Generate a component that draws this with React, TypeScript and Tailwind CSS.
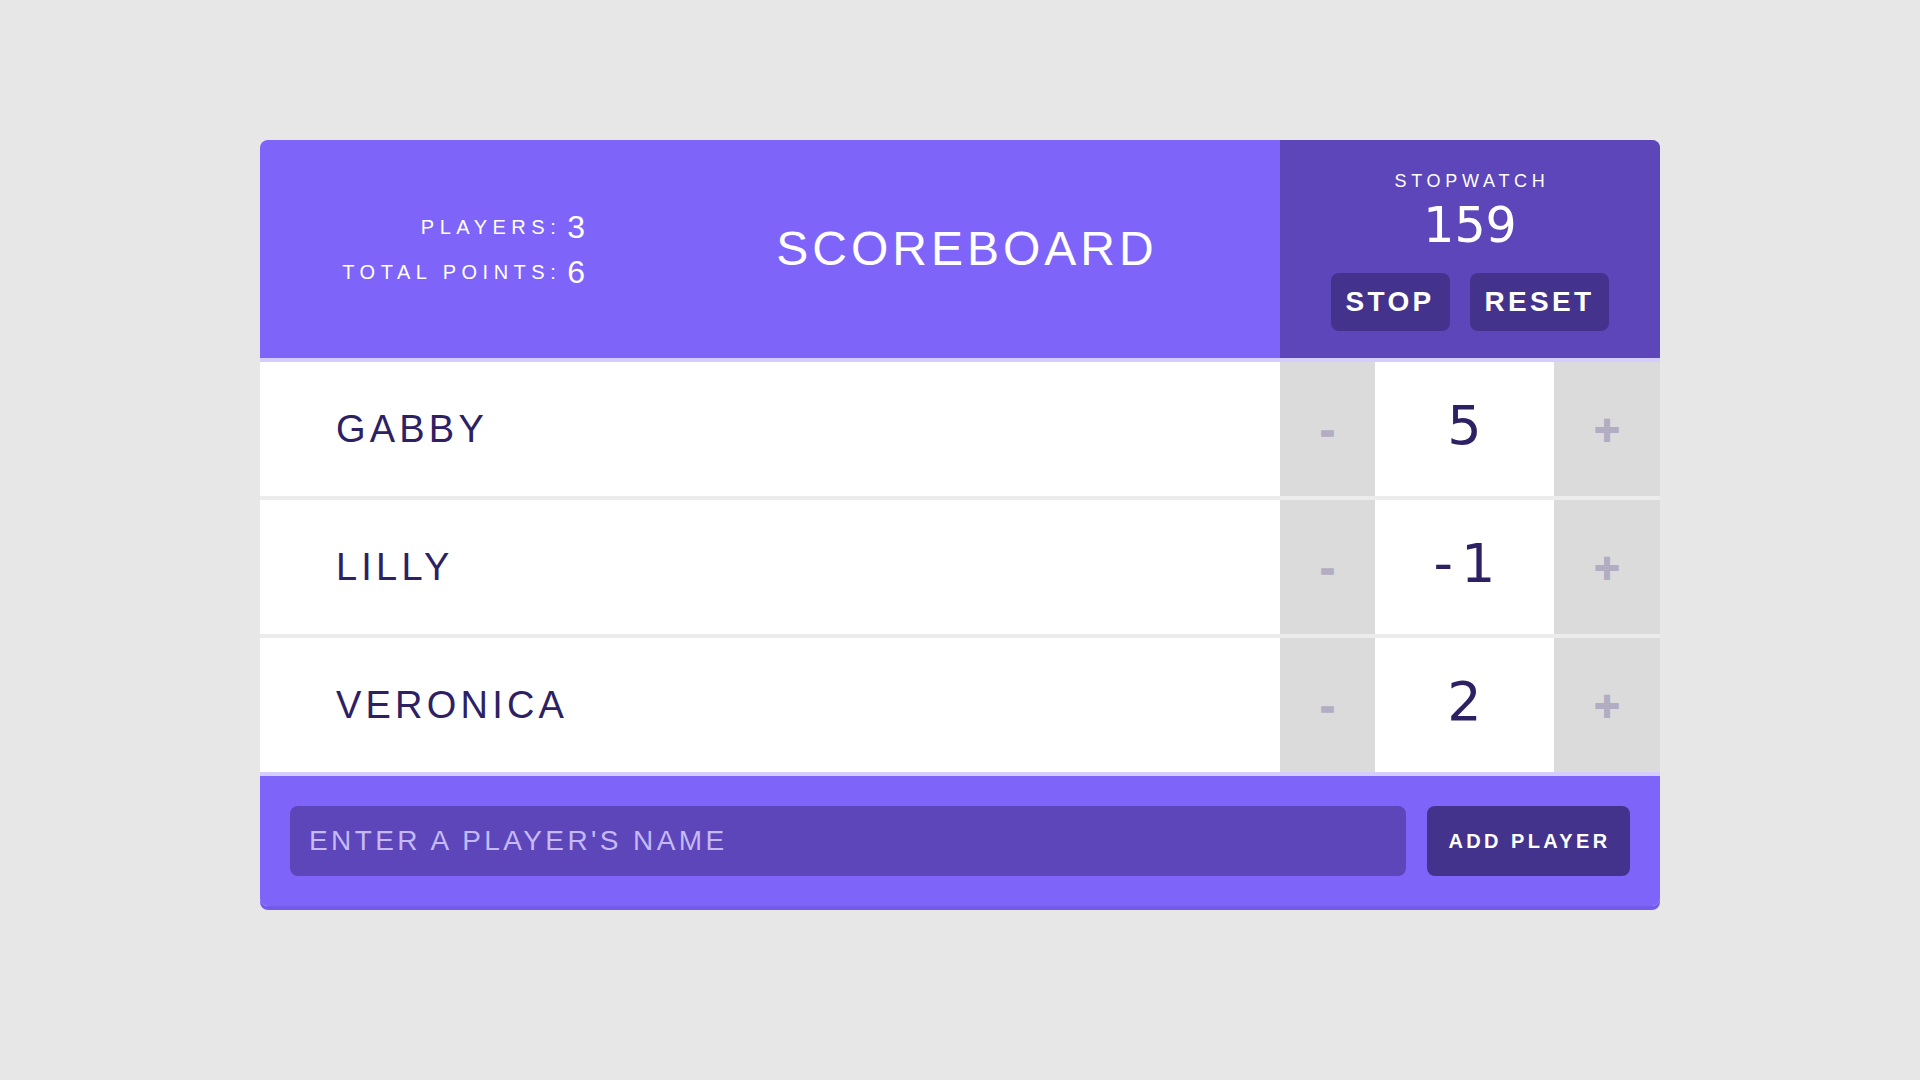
import { useState } from "react"

const sans = "font-['Liberation_Sans',Arial,sans-serif]"
const dejavu = "font-['DejaVu_Sans',Verdana,sans-serif]"

type Player = { id: number; name: string; score: number }

const initialPlayers: Player[] = [
  { id: 1, name: "Gabby", score: 5 },
  { id: 2, name: "Lilly", score: -1 },
  { id: 3, name: "Veronica", score: 2 },
]

function Stats({ players }: { players: Player[] }) {
  const total = players.reduce((sum, p) => sum + p.score, 0)
  return (
    <div className="w-[394px] flex justify-end pr-[69px]">
      <div className="grid grid-cols-[auto_auto] items-center gap-x-[6px]">
        <span className="h-[45px] flex items-center justify-end text-[20px] tracking-[5.5px] text-white">PLAYERS:</span>
        <span className="h-[45px] flex items-center text-[32px] text-white">{players.length}</span>
        <span className="h-[45px] flex items-center justify-end text-[20px] tracking-[5.5px] text-white">TOTAL POINTS:</span>
        <span className="h-[45px] flex items-center text-[32px] text-white">{total}</span>
      </div>
    </div>
  )
}

function Stopwatch() {
  return (
    <div className="w-[380px] self-stretch bg-[#5c46ba] flex flex-col items-center justify-center">
      <div className="text-[18px] leading-[22px] tracking-[4.7px] text-white pl-[4px] mt-[2px]">STOPWATCH</div>
      <div className={`${dejavu} mt-[9px] text-[49px] leading-[50px] text-white`}>159</div>
      <div className="mt-[22px] flex gap-[20px]">
        <button className="h-[58px] px-[15px] rounded-lg bg-[#43338c] text-white text-[28px] font-bold tracking-[3.3px]">
          STOP
        </button>
        <button className="h-[58px] px-[15px] rounded-lg bg-[#43338c] text-white text-[28px] font-bold tracking-[3.3px]">
          RESET
        </button>
      </div>
    </div>
  )
}

function PlayerRow({ player, last }: { player: Player; last: boolean }) {
  return (
    <div className={`flex bg-white ${last ? "h-[134px]" : "h-[138px] border-b-4 border-[#ececec]"}`}>
      <div className="flex-1 flex items-center pl-[76px] text-[38px] tracking-[4.2px] text-[#2d2164] uppercase">
        {player.name}
      </div>
      <button className={`${dejavu} w-[95px] bg-[#dbdbdb] text-[36px] font-bold text-[#b2adc2] [-webkit-text-stroke:1.5px_#b2adc2] flex items-center justify-center pt-[6px]`}>
        -
      </button>
      <div className={`${dejavu} w-[179px] flex items-center justify-center text-[54px] text-[#2d2164] pb-[8px] ${player.score < 0 ? "tracking-[8px] pl-[8px]" : ""}`}>
        {player.score}
      </div>
      <button className={`${dejavu} w-[106px] bg-[#dbdbdb] text-[34px] font-bold text-[#b2adc2] [-webkit-text-stroke:2px_#b2adc2] flex items-center justify-center`}>
        +
      </button>
    </div>
  )
}

export default function App() {
  const [players] = useState<Player[]>(initialPlayers)
  const [name, setName] = useState("")

  return (
    <div className={`${sans} min-h-screen bg-[#e7e7e7] pt-[140px]`}>
      <div className="mx-auto w-[1400px] rounded-lg overflow-hidden shadow-[0_4px_0_#7459ea]">
        {/* Header */}
        <header className="flex items-center h-[222px] bg-[#7f64fa] border-b-4 border-[#d5ccff]">
          <Stats players={players} />
          <h1 className="flex-1 text-center text-[48px] tracking-[4px] text-white font-normal">SCOREBOARD</h1>
          <Stopwatch />
        </header>

        {/* Players */}
        {players.map((p, i) => (
          <PlayerRow key={p.id} player={p} last={i === players.length - 1} />
        ))}

        {/* Add player form */}
        <form
          className="flex gap-[21px] bg-[#7f64fa] border-t-4 border-[#d5ccff] px-[30px] py-[30px]"
          onSubmit={(e) => e.preventDefault()}
        >
          <input
            value={name}
            onChange={(e) => setName(e.target.value)}
            placeholder="ENTER A PLAYER'S NAME"
            className="flex-1 h-[70px] rounded-lg bg-[#5c46ba] pl-[19px] text-[28px] tracking-[3.4px] text-white placeholder:text-[#c5b9f7] outline-none"
          />
          <button className="w-[203px] h-[70px] rounded-lg bg-[#43338c] text-white text-[20px] font-bold tracking-[3.4px] pl-[2px]">
            ADD PLAYER
          </button>
        </form>
      </div>
    </div>
  )
}
